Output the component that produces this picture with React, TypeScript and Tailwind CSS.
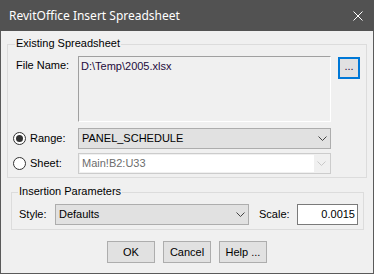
import type { ReactNode } from 'react';

function Chevron({ disabled }: { disabled?: boolean }) {
  return (
    <svg width="9" height="5" viewBox="0 0 9 5" className="block">
      <path
        d="M0.5 0.5 L4.5 4.5 L8.5 0.5"
        fill="none"
        stroke={disabled ? '#c8c8c8' : '#444444'}
        strokeWidth="1"
      />
    </svg>
  );
}

function Radio({ checked }: { checked?: boolean }) {
  return (
    <span className="flex h-[13px] w-[13px] shrink-0 items-center justify-center rounded-full border border-[#333333] bg-white">
      {checked && <span className="h-[7px] w-[7px] rounded-full bg-[#333333]" />}
    </span>
  );
}

type GroupProps = {
  title: string;
  className: string;
  legendClass: string;
  children: ReactNode;
};

function Group({ title, className, legendClass, children }: GroupProps) {
  return (
    <div className={`relative border border-[#dcdcdc] ${className}`}>
      <span className={`absolute top-[-8px] bg-[#f0f0f0] px-[1px] leading-[13px] ${legendClass}`}>
        {title}
      </span>
      {children}
    </div>
  );
}

export default function App() {
  return (
    <div className="flex h-[274px] w-[374px] flex-col font-['Liberation_Sans',Arial,sans-serif] text-[11px] leading-[13px] text-black">
      <div className="flex h-[31px] shrink-0 items-center justify-between bg-[#525252] pl-[9px] pr-[11px] text-white">
        <span className="font-['Noto_Sans',sans-serif] text-[12px]">RevitOffice Insert Spreadsheet</span>
        <svg width="10" height="10" viewBox="0 0 10 10" className="block">
          <path d="M0.5 0.5 L9.5 9.5 M9.5 0.5 L0.5 9.5" stroke="#ffffff" strokeWidth="1" />
        </svg>
      </div>

      <div className="flex flex-1 flex-col border-x border-b border-[#5a5a5a] bg-[#f0f0f0]">
        <Group
          title="Existing Spreadsheet"
          legendClass="left-[7px]"
          className="ml-[6px] mt-[13px] h-[134px] w-[360px]"
        >
          <div className="mt-[11px] flex">
            <span className="ml-[8px] w-[62px] pt-[3px]">File Name:</span>
            <div className="h-[66px] w-[253px] border border-b-white border-l-[#a0a0a0] border-r-white border-t-[#a0a0a0] px-[2px] pt-[3px] text-[#1e0b3c]">
              D:\Temp\2005.xlsx
            </div>
            <button className="ml-[7px] mt-[1px] flex h-[22px] w-[22px] items-center justify-center border-2 border-[#0078d7] bg-[#e1e1e1] pb-[3px] text-[#1e0b3c]">
              ...
            </button>
          </div>

          <div className="mt-[6px] flex items-center">
            <span className="ml-[5px]">
              <Radio checked />
            </span>
            <span className="ml-[4px] w-[48px]">Range:</span>
            <div className="flex h-[21px] w-[253px] items-center justify-between border border-[#adadad] bg-[#e1e1e1] pl-[3px] pr-[3px]">
              <span>PANEL_SCHEDULE</span>
              <Chevron />
            </div>
          </div>

          <div className="mt-[4px] flex items-center">
            <span className="ml-[5px]">
              <Radio />
            </span>
            <span className="ml-[4px] w-[48px]">Sheet:</span>
            <div className="flex h-[21px] w-[253px] border border-[#cccccc] bg-[#f0f0f0] p-[1px]">
              <div className="flex flex-1 items-center bg-white pl-[2px] text-[#6d6d6d]">Main!B2:U33</div>
              <div className="flex w-[15px] items-center justify-center">
                <Chevron disabled />
              </div>
            </div>
          </div>
        </Group>

        <Group
          title="Insertion Parameters"
          legendClass="left-[6px]"
          className="ml-[10px] mt-[14px] h-[38px] w-[353px]"
        >
          <div className="mt-[11px] flex items-center">
            <span className="ml-[7px] w-[36px]">Style:</span>
            <div className="flex h-[21px] w-[194px] items-center justify-between border border-[#adadad] bg-[#e1e1e1] pl-[3px] pr-[3px]">
              <span>Defaults</span>
              <Chevron />
            </div>
            <span className="ml-[10px] w-[38px]">Scale:</span>
            <div className="flex h-[21px] w-[61px] items-center justify-end border border-[#7a7a7a] bg-white pr-[2px]">
              0.0015
            </div>
          </div>
        </Group>

        <div className="mt-[11px] flex justify-center gap-[8px]">
          {['OK', 'Cancel', 'Help ...'].map((label) => (
            <button
              key={label}
              className="flex h-[22px] w-[48px] items-center justify-center border border-[#adadad] bg-[#e1e1e1]"
            >
              {label}
            </button>
          ))}
        </div>
      </div>
    </div>
  );
}
